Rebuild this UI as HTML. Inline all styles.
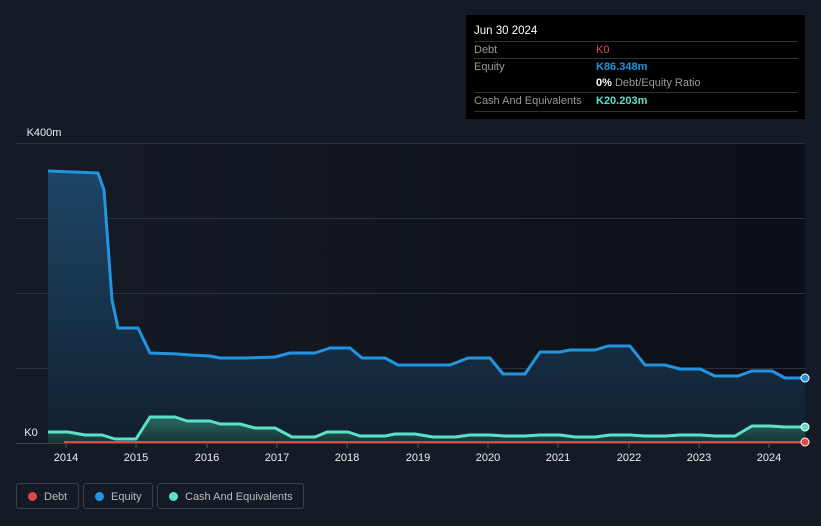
<!DOCTYPE html>
<html><head><style>
body{margin:0;width:821px;height:526px;background:#151b26;font-family:"Liberation Sans",sans-serif;overflow:hidden;position:relative}
.tt{position:absolute;left:466px;top:15px;width:339px;height:104px;background:#000;color:#fff;font-size:11px}
.tt .h{position:absolute;left:8px;top:10px;font-size:11.5px}
.row{position:absolute;left:8px;width:324px;height:17px;border-top:1px solid #333;line-height:17px;color:#999}
.row span{position:absolute;left:122px}
.leg{position:absolute;top:483px;height:26px;border:1px solid #3a404b;border-radius:3px;color:#bbb;font-size:11px;line-height:26px;box-sizing:border-box}
.leg i{position:absolute;left:11px;top:8px;width:9px;height:9px;border-radius:50%}
.leg b{font-weight:normal;position:absolute;left:27px}
</style></head><body>
<svg width="821" height="526" style="position:absolute;left:0;top:0">
<defs>
<linearGradient id="bg" x1="0" x2="1"><stop offset="0" stop-color="#151b26"/><stop offset="1" stop-color="#0c1016"/></linearGradient>
<linearGradient id="eq" x1="0" y1="0" x2="0" y2="1"><stop offset="0" stop-color="#1d4566"/><stop offset="1" stop-color="#11202f"/></linearGradient>
<linearGradient id="ca" x1="0" y1="0" x2="0" y2="1"><stop offset="0" stop-color="#2a6a64"/><stop offset="1" stop-color="#173233"/></linearGradient>
</defs>
<rect x="16" y="143" width="789" height="300" fill="url(#bg)"/>
<g stroke="#2c323c" stroke-width="1">
<line x1="16" y1="143.5" x2="805" y2="143.5"/><line x1="16" y1="218.5" x2="805" y2="218.5"/><line x1="16" y1="293.5" x2="805" y2="293.5"/><line x1="16" y1="368.5" x2="805" y2="368.5"/><line x1="16" y1="443.5" x2="805" y2="443.5" stroke="#444"/>
</g>
<path d="M48,171 L98,173 L104,190 L112,300 L118,328 L138,328 L150,353 L178,354 L190,355 L210,356 L220,358 L245,358 L275,357 L290,353 L315,353 L330,348 L350,348 L362,358 L385,358 L398,365 L450,365 L468,358 L490,358 L503,374 L525,374 L540,352 L560,352 L570,350 L595,350 L608,346 L630,346 L645,365 L665,365 L680,369 L700,369 L715,376 L738,376 L752,371 L772,371 L785,378 L805,378 L805,443 L48,443Z" fill="url(#eq)"/>
<path d="M48,171 L98,173 L104,190 L112,300 L118,328 L138,328 L150,353 L178,354 L190,355 L210,356 L220,358 L245,358 L275,357 L290,353 L315,353 L330,348 L350,348 L362,358 L385,358 L398,365 L450,365 L468,358 L490,358 L503,374 L525,374 L540,352 L560,352 L570,350 L595,350 L608,346 L630,346 L645,365 L665,365 L680,369 L700,369 L715,376 L738,376 L752,371 L772,371 L785,378 L805,378" fill="none" stroke="#2394e0" stroke-width="3" stroke-linejoin="round"/>
<path d="M48,432 L68,432 L85,435 L102,435 L115,439 L136,439 L150,417 L175,417 L187,421 L210,421 L220,424 L240,424 L255,428 L275,428 L292,437 L315,437 L327,432 L348,432 L360,436 L385,436 L395,434 L415,434 L433,437 L455,437 L470,435 L490,435 L505,436 L525,436 L540,435 L560,435 L575,437 L595,437 L610,435 L630,435 L645,436 L665,436 L680,435 L700,435 L715,436 L735,436 L752,426 L770,426 L785,427 L805,427 L805,443 L48,443Z" fill="url(#ca)"/>
<path d="M48,432 L68,432 L85,435 L102,435 L115,439 L136,439 L150,417 L175,417 L187,421 L210,421 L220,424 L240,424 L255,428 L275,428 L292,437 L315,437 L327,432 L348,432 L360,436 L385,436 L395,434 L415,434 L433,437 L455,437 L470,435 L490,435 L505,436 L525,436 L540,435 L560,435 L575,437 L595,437 L610,435 L630,435 L645,436 L665,436 L680,435 L700,435 L715,436 L735,436 L752,426 L770,426 L785,427 L805,427" fill="none" stroke="#5ce0cb" stroke-width="3" stroke-linejoin="round"/>
<line x1="64" y1="442" x2="805" y2="442" stroke="#e04848" stroke-width="2"/>
<circle cx="805" cy="378" r="4" fill="#2394e0" stroke="#fff" stroke-width="1"/>
<circle cx="805" cy="427" r="4" fill="#5ce0cb" stroke="#fff" stroke-width="1"/>
<circle cx="805" cy="442" r="4" fill="#e04848" stroke="#fff" stroke-width="1"/>
<g stroke="#555"><line x1="66" y1="443" x2="66" y2="448"/><line x1="136" y1="443" x2="136" y2="448"/><line x1="207" y1="443" x2="207" y2="448"/><line x1="277" y1="443" x2="277" y2="448"/><line x1="347" y1="443" x2="347" y2="448"/><line x1="418" y1="443" x2="418" y2="448"/><line x1="488" y1="443" x2="488" y2="448"/><line x1="558" y1="443" x2="558" y2="448"/><line x1="629" y1="443" x2="629" y2="448"/><line x1="699" y1="443" x2="699" y2="448"/><line x1="769" y1="443" x2="769" y2="448"/></g>
<g fill="#eee" font-size="11" text-anchor="middle" font-family="Liberation Sans,sans-serif">
<text x="66" y="461">2014</text><text x="136" y="461">2015</text><text x="207" y="461">2016</text><text x="277" y="461">2017</text><text x="347" y="461">2018</text><text x="418" y="461">2019</text><text x="488" y="461">2020</text><text x="558" y="461">2021</text><text x="629" y="461">2022</text><text x="699" y="461">2023</text><text x="769" y="461">2024</text>
<text x="44" y="136">K400m</text><text x="31" y="436">K0</text>
</g>
</svg>
<div class="tt">
<div class="h">Jun 30 2024</div>
<div class="row" style="top:26px">Debt<span style="color:#e04848">K0</span></div>
<div class="row" style="top:43px">Equity<span style="color:#2394e0;font-weight:bold">K86.348m</span></div>
<div class="row" style="top:60px;border-top:none"><span style="color:#999"><b style="color:#fff">0%</b> Debt/Equity Ratio</span></div>
<div class="row" style="top:77px">Cash And Equivalents<span style="color:#5ce0cb;font-weight:bold">K20.203m</span></div>
<div class="row" style="top:96px;height:0"></div>
</div>
<div class="leg" style="left:16px;width:63px"><i style="background:#e04848"></i><b>Debt</b></div>
<div class="leg" style="left:83px;width:70px"><i style="background:#2394e0"></i><b>Equity</b></div>
<div class="leg" style="left:157px;width:147px"><i style="background:#5ce0cb"></i><b>Cash And Equivalents</b></div>
</body></html>
